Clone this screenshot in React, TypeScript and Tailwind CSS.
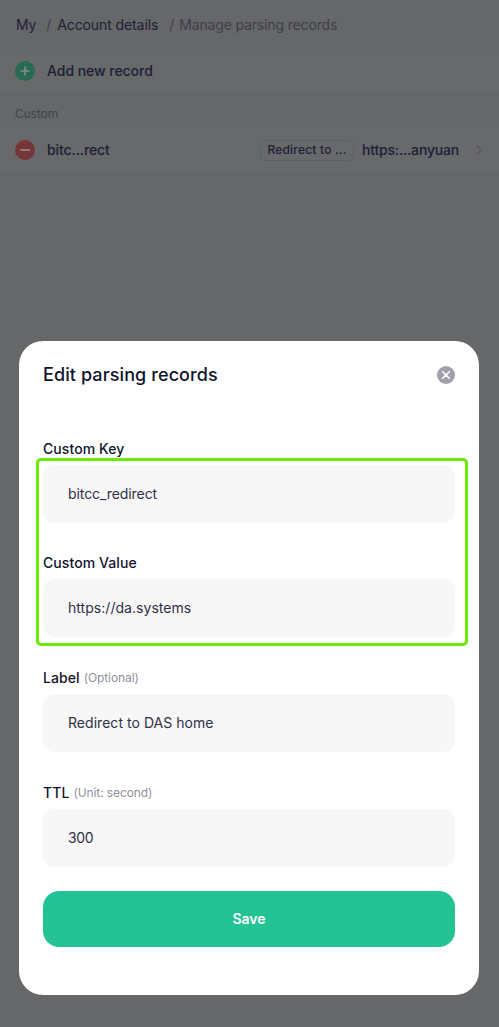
import type { ReactNode } from "react";

type FieldProps = { label: string; hint?: ReactNode; value: string; className: string; valueClass?: string };

function Field({ label, hint, value, className, valueClass = "tracking-[0.04px]" }: FieldProps) {
  return (
    <label className={`flex flex-col ${className}`}>
      <span className="flex h-6 items-center pb-[2px] text-[14px] font-medium tracking-[0.08px] text-[#11142d]">
        {label}
        {hint}
      </span>
      <span className={`mt-1 flex h-[58px] items-center rounded-xl bg-[#f7f7f7] px-[25px] pb-[2px] text-[14px] text-[#303046] ${valueClass}`}>
        {value}
      </span>
    </label>
  );
}

function Hint({ children }: { children: ReactNode }) {
  return <span className="ml-1 pt-[2px] text-[12px] font-normal tracking-[-0.1px] text-[#8f909c]">{children}</span>;
}

export default function App() {
  return (
    <div className="relative h-[1027px] w-full overflow-hidden bg-[#666769] font-['Inter','Noto_Sans',sans-serif] text-[14px] text-[#1d1e33]">
      <nav className="flex h-[50px] items-center pb-[2px] pl-4 tracking-[-0.14px]">
        <span>My</span>
        <span className="ml-[10px] text-[#3e3f4b]">/</span>
        <span className="ml-[6px] tracking-[-0.1px]">Account details</span>
        <span className="ml-[11px] text-[#3e3f4b]">/</span>
        <span className="ml-[5px] tracking-[-0.15px] text-[#3e3f4b]">Manage parsing records</span>
      </nav>
      <div className="flex h-[41px] items-center bg-[#68696b] pl-[15px] font-medium tracking-[-0.04px]">
        <svg width="20" height="20" viewBox="0 0 20 20" className="mr-3">
          <circle cx="10" cy="10" r="10" fill="#286b54" />
          <path d="M6 10h8M10 6v8" stroke="#848b88" strokeWidth="1.6" strokeLinecap="round" />
        </svg>
        Add new record
      </div>
      <div className="flex h-[37px] items-center pt-2 pl-[15px] text-[12px] tracking-[-0.1px] text-[#414249]">Custom</div>
      <div className="flex h-[44px] items-center bg-[#68696b] pr-[14px] pl-[15px] font-medium tracking-[-0.1px]">
        <svg width="20" height="20" viewBox="0 0 20 20" className="mr-3 shrink-0">
          <circle cx="10" cy="10" r="10" fill="#763536" />
          <path d="M5.8 10h8.4" stroke="#91797a" strokeWidth="1.8" strokeLinecap="round" />
        </svg>
        <span className="pb-[2px]">bitc...rect</span>
        <span className="ml-auto flex h-[21px] w-[94px] items-center justify-center rounded-[4px] border border-[#5f6063] text-[12px] tracking-[0.2px]">
          Redirect to ...
        </span>
        <span className="ml-2 w-[98px] pb-[2px] tracking-[-0.18px] whitespace-nowrap">https:...anyuan</span>
        <svg width="8" height="12" viewBox="0 0 8 12" className="mr-[2px] ml-[15px]" fill="none">
          <path d="M2 1.5 6 6 2 10.5" stroke="#56575c" strokeWidth="1.2" />
        </svg>
      </div>

      <div role="dialog" className="absolute top-[341px] left-[19px] flex h-[654px] w-[460px] flex-col rounded-[24px] bg-white px-6 pt-5">
        <header className="flex h-7 items-center justify-between text-[18px] font-medium tracking-[0.1px] text-[#11142d]">
          <h1 className="pb-[2px]">Edit parsing records</h1>
          <svg width="18" height="18" viewBox="0 0 18 18">
            <circle cx="9" cy="9" r="9" fill="#a0a1ac" />
            <path d="m5.7 5.7 6.6 6.6m0-6.6-6.6 6.6" stroke="white" strokeWidth="1.6" strokeLinecap="round" />
          </svg>
        </header>
        <Field className="mt-12" label="Custom Key" value="bitcc_redirect" valueClass="tracking-[-0.08px]" />
        <Field className="mt-7" label="Custom Value" value="https://da.systems" />
        <Field className="mt-[29px]" label="Label" hint={<Hint>(Optional)</Hint>} value="Redirect to DAS home" />
        <Field className="mt-[29px]" label="TTL" hint={<Hint>(Unit: second)</Hint>} value="300" valueClass="tracking-[-0.4px]" />
        <button className="mt-6 h-14 shrink-0 rounded-2xl bg-[#24c393] pb-[2px] text-[14px] font-semibold text-white">Save</button>
        <div className="pointer-events-none absolute top-[117px] left-[17px] h-[188px] w-[432px] rounded-[5px] border-[3px] border-[#69ec00]" />
      </div>
    </div>
  );
}
